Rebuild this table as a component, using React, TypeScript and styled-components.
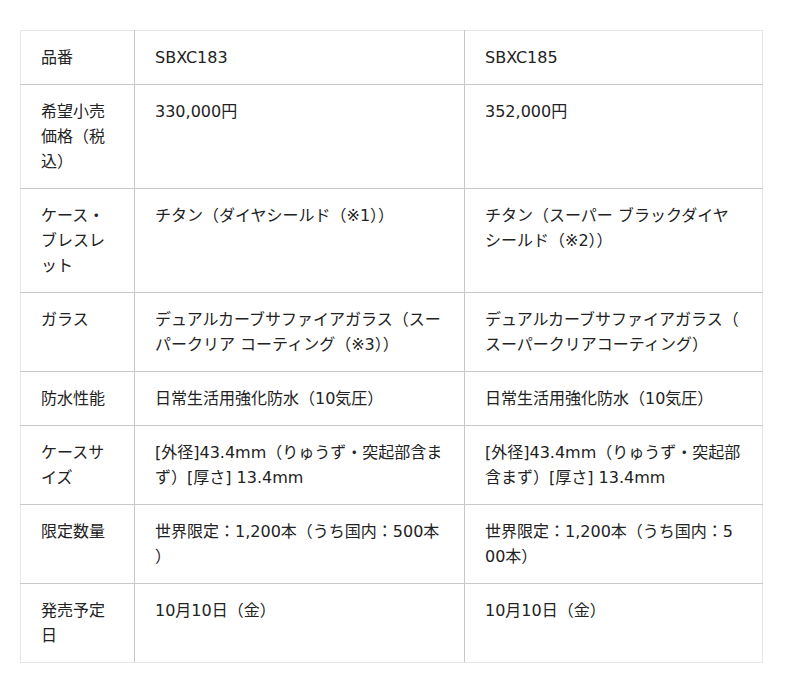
import React from "react";
import styled, { createGlobalStyle } from "styled-components";

const GlobalStyle = createGlobalStyle`
  body {
    margin: 0;
    background: #ffffff;
    font-family: "DejaVu Sans", "Noto Sans CJK JP", sans-serif;
    color: #222222;
  }
`;

const Page = styled.div`
  padding: 30px 38px 30px 20px;
`;

const Table = styled.table`
  width: 742px;
  border-collapse: collapse;
  table-layout: fixed;
  border: 1px solid #e6e6e6;
`;

const Col = styled.col<{ width: number }>`
  width: ${props => props.width}px;
`;

const Cell = styled.td`
  box-sizing: border-box;
  padding: 14px 20px;
  vertical-align: top;
  font-size: 16px;
  line-height: 25px;
  border-right: 1px solid #c8c8c8;
  border-bottom: 1px solid #c8c8c8;
  word-break: break-all;
  line-break: anywhere;

  &:last-child {
    border-right: 1px solid #e6e6e6;
  }
`;

const Row = styled.tr`
  &:last-child td {
    border-bottom: 1px solid #e6e6e6;
  }
`;

interface Spec {
  label: string;
  a: string;
  b: string;
}

const specs: Spec[] = [
  { label: "品番", a: "SBXC183", b: "SBXC185" },
  { label: "希望小売価格（税込）", a: "330,000円", b: "352,000円" },
  {
    label: "ケース・ブレスレット",
    a: "チタン（ダイヤシールド（※1））",
    b: "チタン（スーパー ブラックダイヤシールド（※2））",
  },
  {
    label: "ガラス",
    a: "デュアルカーブサファイアガラス（スーパークリア コーティング（※3））",
    b: "デュアルカーブサファイアガラス（スーパークリアコーティング）",
  },
  { label: "防水性能", a: "日常生活用強化防水（10気圧）", b: "日常生活用強化防水（10気圧）" },
  {
    label: "ケースサイズ",
    a: "[外径]43.4mm（りゅうず・突起部含まず）[厚さ] 13.4mm",
    b: "[外径]43.4mm（りゅうず・突起部含まず）[厚さ] 13.4mm",
  },
  {
    label: "限定数量",
    a: "世界限定：1,200本（うち国内：500本）",
    b: "世界限定：1,200本（うち国内：500本）",
  },
  { label: "発売予定日", a: "10月10日（金）", b: "10月10日（金）" },
];

const App = () => {
  return (
    <Page>
      <GlobalStyle />
      <Table>
        <colgroup>
          <Col width={114} />
          <Col width={330} />
          <Col width={298} />
        </colgroup>
        <tbody>
          {specs.map(spec => (
            <Row key={spec.label}>
              <Cell>{spec.label}</Cell>
              <Cell>{spec.a}</Cell>
              <Cell>{spec.b}</Cell>
            </Row>
          ))}
        </tbody>
      </Table>
    </Page>
  );
};

export default App;
